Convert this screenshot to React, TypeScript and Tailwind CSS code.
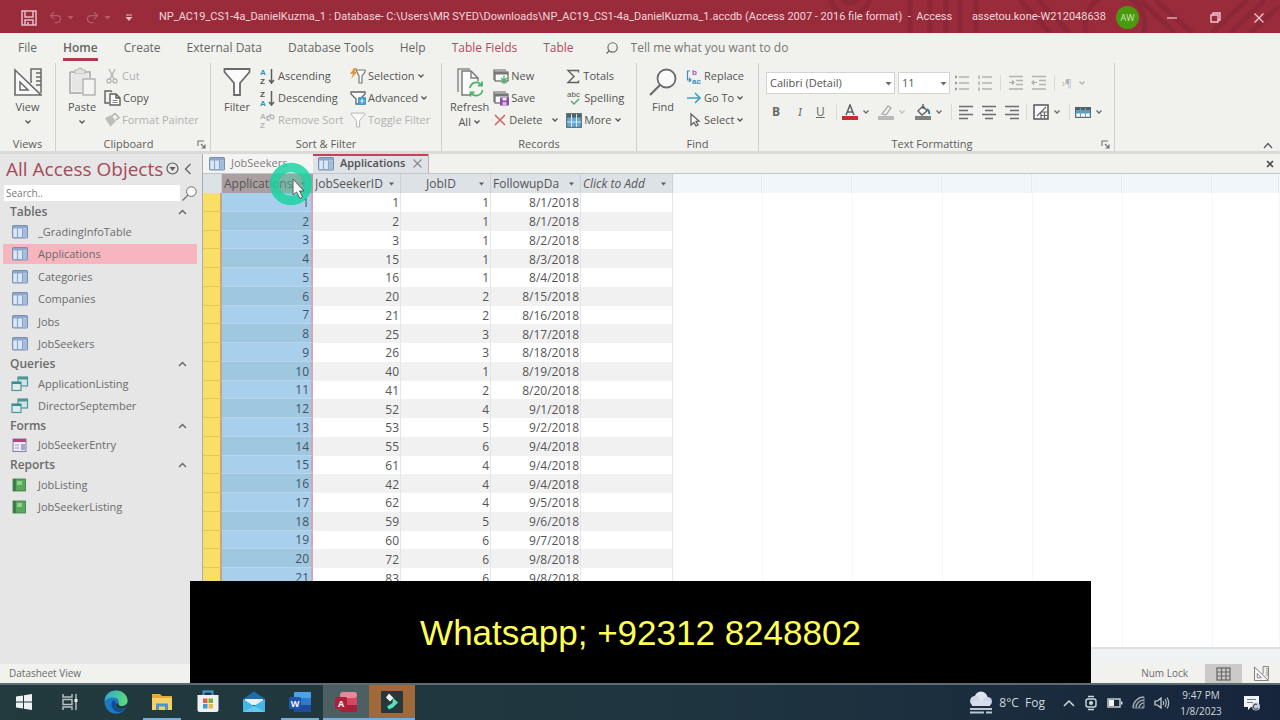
import React from "react";
import { Undo2, Redo2, Search } from "lucide-react";

type SvgProps = { w?: number; h?: number; vb?: string; children: React.ReactNode };

function Svg({ w = 16, h = 16, vb, children }: SvgProps) {
  return (
    <svg width={w} height={h} viewBox={vb ?? `0 0 ${w} ${h}`} fill="none" className="shrink-0" aria-hidden="true">
      {children}
    </svg>
  );
}

function Chevron() {
  return (
    <Svg w={8} h={6}>
      <path d="M1.5 1.5 L4 4 L6.5 1.5" stroke="currentColor" strokeWidth="1.3" />
    </Svg>
  );
}

function Caret() {
  return (
    <Svg w={7} h={5}>
      <path d="M0.5 1 H6.5 L3.5 4.5 Z" fill="currentColor" />
    </Svg>
  );
}

function ViewIcon({ size = 28 }: { size?: number }) {
  return (
    <Svg w={size} h={size} vb="0 0 28 28">
      <path d="M1 2 L27 27 H1 Z" stroke="#6a6a6a" strokeWidth="1.6" fill="#fafafa" />
      <path d="M6 14 L14 22 H6 Z" stroke="#6a6a6a" strokeWidth="1.5" />
      <path d="M17 15 V1 H27 V25" stroke="#6a6a6a" strokeWidth="1.5" />
      <path d="M22 5 H27 M22 9 H27 M22 13 H27 M22 17 H27" stroke="#6a6a6a" strokeWidth="1.3" />
    </Svg>
  );
}

function PasteIcon() {
  return (
    <Svg w={28} h={30}>
      <path d="M2 5 H8 M15 5 H22 V11 M2 5 V26 H14" stroke="#b9b9b7" strokeWidth="2" />
      <path d="M8 3 H10 C10 0.5 14 0.5 14 3 H17 V7 H7 V3 Z" fill="#e4e4e2" stroke="#b9b9b7" strokeWidth="1.2" />
      <path d="M4 7 H20 V11 H14 V24 H4 Z" fill="#e6e6e4" />
      <rect x="15" y="12" width="12" height="16" fill="#f4f4f2" stroke="#b0b0ae" strokeWidth="1.4" />
    </Svg>
  );
}

function FunnelIcon({ w = 28, h = 30, muted = false }: { w?: number; h?: number; muted?: boolean }) {
  return (
    <Svg w={w} h={h} vb="0 0 28 30">
      <path d="M1.5 2 H26.5 V5 L17 16 V28 H11 V16 L1.5 5 Z" fill="#fbfbfb" stroke={muted ? "#b5b5b5" : "#6a6a6a"} strokeWidth="1.8" />
    </Svg>
  );
}

function RefreshIcon() {
  return (
    <Svg w={30} h={30}>
      <path d="M3 25 V2 H15" stroke="#8a8a8a" strokeWidth="1.5" />
      <path d="M7 28 V4 H16 L23 11 V28 Z" fill="#fdfdfd" stroke="#7b7b7b" strokeWidth="1.5" />
      <path d="M16 4 V11 H23" stroke="#7b7b7b" strokeWidth="1.4" />
      <circle cx="21" cy="22" r="8" fill="#f3f3f0" />
      <path d="M15 21 A6.4 6.4 0 0 1 26.5 18 M27 14.500 V18.500 H23 M27.500 23 A6.400 6.400 0 0 1 16 26 M15.500 29.500 V25.500 H19.500" stroke="#4cb36a" strokeWidth="1.8" />
    </Svg>
  );
}

function FindIcon({ size = 28 }: { size?: number }) {
  return (
    <Svg w={size} h={size} vb="0 0 28 28">
      <circle cx="17.500" cy="10.500" r="9" stroke="#6a6a6a" strokeWidth="1.8" fill="#fafafa" />
      <path d="M11 17 L1 27" stroke="#6a6a6a" strokeWidth="2.2" />
    </Svg>
  );
}

function SortIcon({ top, bottom, muted = false }: { top: string; bottom: string; muted?: boolean }) {
  const tone = (letter: string) => (muted ? "#b5b5b5" : letter === "A" ? "#2b93b8" : "#555555");
  return (
    <Svg w={17} h={20}>
      <text x="1" y="9" fontSize="8" fontWeight="700" fontFamily="Liberation Sans, sans-serif" fill={tone(top)}>{top}</text>
      <text x="1" y="18" fontSize="8" fontWeight="700" fontFamily="Liberation Sans, sans-serif" fill={tone(bottom)}>{bottom}</text>
      {muted ? (
        <path d="M8 9 C9 4 15 4 15 7 C15 10 11 9 11 6 M8 6 V10 H11" stroke="#b5b5b5" strokeWidth="1.3" />
      ) : (
        <path d="M12.500 3 V17 M10 14 L12.500 17 L15 14" stroke="#5f5f5f" strokeWidth="1.5" />
      )}
    </Svg>
  );
}

function CutIcon() {
  return (
    <Svg>
      <path d="M5 1 L10 11 M11 1 L6 11" stroke="#b5b5b5" strokeWidth="1.4" />
      <circle cx="5" cy="13" r="2" stroke="#b5b5b5" strokeWidth="1.3" />
      <circle cx="11" cy="13" r="2" stroke="#b5b5b5" strokeWidth="1.3" />
    </Svg>
  );
}

function CopyIcon() {
  return (
    <Svg w={17}>
      <path d="M5 13 H1 V1 H7 L8 2" stroke="#5f5f5f" strokeWidth="1.4" />
      <path d="M6 4 H12 L16 8 V15 H6 Z M12 4 V8 H16" stroke="#5f5f5f" strokeWidth="1.4" fill="#fcfcfc" />
      <path d="M8.500 10.500 H13.500 M8.500 12.500 H13.500" stroke="#8a8a8a" />
    </Svg>
  );
}

function PainterIcon() {
  return (
    <Svg>
      <path d="M1 6 L7 3 L12 9 L6 15 C6 12 3 11 1 6 Z" fill="#bdbdbb" />
      <path d="M8 4 L11 1.500 L15 5.500 L12 8" stroke="#b0b0ae" strokeWidth="1.5" />
    </Svg>
  );
}

function SelectionIcon() {
  return (
    <Svg>
      <path d="M6 2 H15 V4 L12 8 V15 H9 V8 Z" fill="#fafafa" stroke="#777777" strokeWidth="1.2" />
      <path d="M4 0 L0 6 H3 L1 11 L7 4 H4.500 L7 0 Z" fill="#e5943a" />
    </Svg>
  );
}

function AdvancedIcon() {
  return (
    <Svg>
      <path d="M1 2 H15 V4 L10 9 V14 H6 V9 L1 4 Z" fill="#fafafa" stroke="#666666" strokeWidth="1.3" />
      <rect x="8" y="7" width="8" height="8" rx="1" fill="#3f9ec8" />
      <path d="M12 8.500 V13.500 M9.500 11 H14.500" stroke="#dbeef8" strokeWidth="1.2" />
    </Svg>
  );
}

function RecordIcon({ save = false }: { save?: boolean }) {
  return (
    <Svg w={16} h={15}>
      <path d="M1 11 V1 H13" stroke="#666666" strokeWidth="1.2" />
      <rect x="2" y="3" width="13" height="9" stroke="#666666" strokeWidth="1.2" fill="#fafafa" />
      <rect x="2" y="3" width="13" height="2.500" fill="#777777" />
      {save ? (
        <>
          <rect x="7" y="6.500" width="9" height="8" fill="#8d4ba8" />
          <rect x="9.500" y="7" width="4" height="2.500" fill="#f5eaf8" />
          <rect x="9.500" y="11" width="4" height="3" fill="#d9b9e4" />
        </>
      ) : (
        <path d="M11 6.500 V15 M8 9 L13.500 14 M14 9 L8.500 14" stroke="#4fae6b" strokeWidth="1.3" />
      )}
    </Svg>
  );
}

function DeleteIcon() {
  return (
    <Svg w={14} h={14}>
      <path d="M2 2 L12 12 M12 2 L2 12" stroke="#d06a70" strokeWidth="1.7" />
    </Svg>
  );
}

function SigmaIcon() {
  return (
    <Svg w={15} h={15}>
      <path d="M12.500 3.500 V1.500 H2 L8 7.500 L2 13.500 H12.500 V11.500" stroke="#5f5f5f" strokeWidth="1.4" />
    </Svg>
  );
}

function SpellIcon() {
  return (
    <Svg w={16} h={18}>
      <text x="1" y="8" fontSize="8" fontFamily="Liberation Sans, sans-serif" fill="#555555">abc</text>
      <path d="M5 12 L8 15 L13 10" stroke="#4fae6b" strokeWidth="1.5" />
    </Svg>
  );
}

function MoreIcon() {
  return (
    <Svg w={16} h={15}>
      <rect x="0.700" y="0.700" width="14.600" height="13.600" fill="#63a9d6" stroke="#5b6a74" strokeWidth="1.200" />
      <rect x="1" y="1" width="14" height="3.500" fill="#555f68" />
      <path d="M5.500 1 V14 M10.500 1 V14 M1 9 H15" stroke="#e3f0f8" strokeWidth="0.900" />
    </Svg>
  );
}

function RowColourIcon() {
  return (
    <Svg w={16} h={11}>
      <rect x="0.600" y="0.600" width="14.800" height="9.800" fill="#f6fafc" stroke="#5b6a74" strokeWidth="1.200" />
      <rect x="0" y="0" width="16" height="3" fill="#555f68" />
      <rect x="1" y="3" width="14" height="3.500" fill="#4f9fd0" />
      <path d="M5.500 1 V10 M10.500 1 V10" stroke="#8a98a2" strokeWidth="1" />
    </Svg>
  );
}

function ReplaceIcon() {
  return (
    <Svg w={16} h={20}>
      <text x="6" y="9" fontSize="8" fontWeight="700" fontFamily="Liberation Sans, sans-serif" fill="#a255b4">b</text>
      <text x="6" y="18" fontSize="8" fontWeight="700" fontFamily="Liberation Sans, sans-serif" fill="#3a8fc0">ac</text>
      <path d="M4 5 H1.500 V14 H4.500 M3 12 L5 14 L3 16" stroke="#3a8fc0" strokeWidth="1.200" />
    </Svg>
  );
}

function ArrowIcon() {
  return (
    <Svg w={16} h={14}>
      <path d="M1 7 H14 M9 2 L14 7 L9 12" stroke="#3fa3c4" strokeWidth="1.700" />
    </Svg>
  );
}

function PointerIcon() {
  return (
    <Svg w={16} h={16}>
      <path d="M5 2 V13 L8 10.500 L10 14 L12 13 L10 9.500 L13 9 Z" stroke="#5f5f5f" strokeWidth="1.300" fill="#fdfdfd" />
    </Svg>
  );
}

function TableIcon() {
  return (
    <Svg w={16} h={14}>
      <rect x="0.600" y="0.600" width="14.800" height="12.300" rx="1" fill="#dbe8f5" stroke="#7590b3" strokeWidth="1.200" />
      <rect x="1" y="1" width="14" height="2.500" fill="#8da7c9" />
      <path d="M5.500 3 V13 M10.500 3 V13" stroke="#8da7c9" strokeWidth="1.200" />
      <rect x="11" y="4" width="4" height="8.500" fill="#a5bddb" />
    </Svg>
  );
}

function QueryIcon() {
  return (
    <Svg w={18} h={16}>
      <rect x="7" y="1" width="9.500" height="9" fill="#cfe6e6" stroke="#4f9699" strokeWidth="1.200" />
      <rect x="7" y="1" width="9.500" height="2.500" fill="#4f9699" />
      <rect x="1" y="6" width="9" height="8.500" fill="#dbeceb" stroke="#4f9699" strokeWidth="1.200" />
      <rect x="1" y="6" width="9" height="2" fill="#3e8a92" />
    </Svg>
  );
}

function FormIcon() {
  return (
    <Svg w={16} h={15}>
      <rect x="1" y="1" width="13" height="12.500" fill="#eeeaf6" stroke="#8b83ab" strokeWidth="1.100" />
      <rect x="1" y="1" width="13" height="3" fill="#b4467e" />
      <path d="M3 7 H7 M3 10 H7" stroke="#a29bc0" strokeWidth="1.200" />
      <rect x="9" y="6" width="4" height="6" fill="#a7a4d2" />
    </Svg>
  );
}

function ReportIcon() {
  return (
    <Svg w={16} h={14}>
      <rect x="1" y="1" width="12.500" height="12" fill="#58a85b" stroke="#3e7a45" strokeWidth="0.800" />
      <rect x="1" y="1" width="3" height="12" fill="#3d7c44" />
      <path d="M5 3 H10 V7 H5 Z" fill="#8fd08c" />
    </Svg>
  );
}

function ListIcon({ kind }: { kind: "bullets" | "numbers" | "outdent" | "indent" }) {
  const indent = kind === "outdent" || kind === "indent";
  return (
    <Svg w={16} h={16}>
      {indent ? (
        <>
          <path d="M1 1.500 H15 M8 5.500 H15 M8 9.500 H15 M1 14 H15" stroke="#b3b3b1" strokeWidth="1.300" />
          <path d={kind === "outdent" ? "M6 7.500 H1 M3 5.500 L1 7.500 L3 9.500" : "M1 7.500 H6 M4 5.500 L6 7.500 L4 9.500"} stroke="#a9a9a7" strokeWidth="1.200" />
        </>
      ) : (
        <>
          <path d="M5 2 H15 M5 8 H15 M5 14 H15" stroke="#b3b3b1" strokeWidth="1.400" />
          {kind === "bullets" ? (
            <path d="M1 2 H3 M1 8 H3 M1 14 H3" stroke="#9f9f9d" strokeWidth="2.400" />
          ) : (
            <path d="M2 0.500 V4 M2 6.500 V10 M2 12.500 V16" stroke="#a6a6a4" strokeWidth="1.300" />
          )}
        </>
      )}
    </Svg>
  );
}

function AlignIcon({ kind }: { kind: "left" | "center" | "right" }) {
  const short = kind === "left" ? "M1 5.500 H10 M1 13.500 H10" : kind === "center" ? "M4 5.500 H12 M4 13.500 H12" : "M6 5.500 H15 M6 13.500 H15";
  return (
    <Svg w={16} h={15}>
      <path d={`M1 1.500 H15 M1 9.500 H15 ${short}`} stroke="#6d6d6b" strokeWidth="1.300" />
    </Svg>
  );
}

function Launcher() {
  return (
    <Svg w={9} h={9}>
      <path d="M1 6 V1 H7 M4 4 L8 8 M8 4.500 V8 H4.500" stroke="#6f6f6f" strokeWidth="1.100" />
    </Svg>
  );
}

function Small({ icon, label, muted = false, menu = false, split = false }: { icon: React.ReactNode; label: string; muted?: boolean; menu?: boolean; split?: boolean }) {
  return (
    <button type="button" className={`flex h-[22px] items-center gap-[2px] whitespace-nowrap text-[11px] ${muted ? "text-[#b0b0ae]" : "text-[#545452]"}`}>
      {icon}
      <span>{label}</span>
      {split && <span className="w-1" />}
      {(menu || split) && <Chevron />}
    </button>
  );
}

function Large({ icon, label, second, menu = false }: { icon: React.ReactNode; label: string; second?: string; menu?: boolean }) {
  return (
    <button type="button" className="flex flex-col items-center text-[11px] leading-[15px] text-[#545452]">
      <span className="flex h-[34px] items-center">{icon}</span>
      <span>{label}</span>
      {second && (
        <span className="flex items-center gap-[2px]">
          {second}
          <Chevron />
        </span>
      )}
      {menu && (
        <span className="flex h-[15px] items-center">
          <Chevron />
        </span>
      )}
    </button>
  );
}

function Group({ label, width, launcher = false, children }: { label: string; width: string; launcher?: boolean; children: React.ReactNode }) {
  return (
    <section className={`flex shrink-0 flex-col ${width}`} aria-label={label}>
      <div className="flex flex-1 border-r border-[#cfcfcd]">{children}</div>
      <div className="flex h-[14px] items-center border-r border-[#cfcfcd] px-1 text-[11px] leading-[14px] text-[#5c5c5a]">
        <span className="flex-1 text-center">{label}</span>
        {launcher && (
          <button type="button" aria-label={`${label} settings`}>
            <Launcher />
          </button>
        )}
      </div>
    </section>
  );
}

function Divider() {
  return <span className="h-4 w-px bg-[#d9d9d7]" />;
}

const ribbonTabs = [
  { name: "File", look: "" },
  { name: "Home", look: "font-semibold" },
  { name: "Create", look: "" },
  { name: "External Data", look: "" },
  { name: "Database Tools", look: "" },
  { name: "Help", look: "" },
  { name: "Table Fields", look: "text-[#b34a5e]" },
  { name: "Table", look: "text-[#b34a5e]" },
];

const navGroups = [
  { name: "Tables", height: "h-[135px]", icon: <TableIcon />, items: ["_GradingInfoTable", "Applications", "Categories", "Companies", "Jobs", "JobSeekers"] },
  { name: "Queries", height: "h-[45px]", icon: <QueryIcon />, items: ["ApplicationListing", "DirectorSeptember"] },
  { name: "Forms", height: "h-[22px]", icon: <FormIcon />, items: ["JobSeekerEntry"] },
  { name: "Reports", height: "h-[45px]", icon: <ReportIcon />, items: ["JobListing", "JobSeekerListing"] },
];

const rows: [number, number, string][] = [
  [1, 1, "8/1/2018"],
  [2, 1, "8/1/2018"],
  [3, 1, "8/2/2018"],
  [15, 1, "8/3/2018"],
  [16, 1, "8/4/2018"],
  [20, 2, "8/15/2018"],
  [21, 2, "8/16/2018"],
  [25, 3, "8/17/2018"],
  [26, 3, "8/18/2018"],
  [40, 1, "8/19/2018"],
  [41, 2, "8/20/2018"],
  [52, 4, "9/1/2018"],
  [53, 5, "9/2/2018"],
  [55, 6, "9/4/2018"],
  [61, 4, "9/4/2018"],
  [42, 4, "9/4/2018"],
  [62, 4, "9/5/2018"],
  [59, 5, "9/6/2018"],
  [60, 6, "9/7/2018"],
  [72, 6, "9/8/2018"],
  [83, 6, "9/8/2018"],
];

function TitleBar() {
  return (
    <header className="relative flex h-[33px] shrink-0 items-center overflow-hidden bg-[#9a2b3b] pt-[2px] text-[11px] text-[#f0d6da]">
      <div className="absolute inset-y-0 right-0">
        <Svg w={500} h={33}>
          <g stroke="#7f2434" strokeWidth="5" opacity="0.500">
            <circle cx="70" cy="-5" r="20" />
            <circle cx="70" cy="-5" r="8" />
            <path d="M130 0 V33 M150 0 V33 M166 0 V33 M180 0 V33 M196 0 V33 M240 0 L270 33 M258 0 L290 33" />
            <circle cx="335" cy="24" r="30" />
            <path d="M360 0 L395 33 M376 0 L412 33 M450 33 L485 0 M432 33 L467 0 M470 33 L500 6" />
          </g>
        </Svg>
      </div>
      <div className="relative flex w-[159px] shrink-0 items-center gap-[11px] pl-[21px]">
        <button type="button" aria-label="Save">
          <Svg w={16} h={16}>
            <path d="M1 1 H15 V15 H1 Z M4 1 V7 H12 V1 M4 15 V10 H12 V15 M7 12 V15" stroke="#e6bcc3" strokeWidth="1.500" />
          </Svg>
        </button>
        <button type="button" aria-label="Undo" className="flex items-center gap-1 text-[#b85a68]">
          <Undo2 size={15} />
          <Caret />
        </button>
        <button type="button" aria-label="Redo" className="flex items-center gap-1 text-[#b85a68]">
          <Redo2 size={15} />
          <Caret />
        </button>
        <button type="button" aria-label="Customize toolbar" className="ml-[3px] text-[#e6bcc3]">
          <Svg w={8} h={8}>
            <path d="M1 1 H7" stroke="currentColor" />
            <path d="M0.500 3 H7.500 L4 7 Z" fill="currentColor" />
          </Svg>
        </button>
      </div>
      <h1 className="relative flex-1 font-[Roboto,sans-serif] whitespace-pre">
        {"NP_AC19_CS1-4a_DanielKuzma_1 : Database- C:\\Users\\MR SYED\\Downloads\\NP_AC19_CS1-4a_DanielKuzma_1.accdb (Access 2007 - 2016 file format)  -  Access"}
      </h1>
      <div className="relative flex shrink-0 items-center">
        <span className="font-[Roboto,sans-serif]">assetou.kone-W212048638</span>
        <span className="ml-[10px] flex size-[23px] items-center justify-center rounded-full bg-[#4a9a10] text-[9px] text-[#cfe8b4]">AW</span>
        <button type="button" aria-label="Minimize" className="flex w-[43px] justify-center pl-[22px]">
          <Svg w={10} h={10}>
            <path d="M0 5 H10" stroke="#efc9cf" strokeWidth="1.200" />
          </Svg>
        </button>
        <button type="button" aria-label="Restore" className="ml-[28px]">
          <Svg w={11} h={11}>
            <path d="M1 3 H8 V10 H1 Z M3 3 V1 H10 V8 H8" stroke="#efc9cf" strokeWidth="1.400" />
          </Svg>
        </button>
        <button type="button" aria-label="Close" className="mr-[16px] ml-[33px]">
          <Svg w={10} h={10}>
            <path d="M0.500 0.500 L9.500 9.500 M9.500 0.500 L0.500 9.500" stroke="#efc9cf" strokeWidth="1.300" />
          </Svg>
        </button>
      </div>
    </header>
  );
}

function Ribbon() {
  return (
    <div className="flex h-[121px] shrink-0 flex-col border-b-[3px] border-[#dadad8] bg-[#f1f2ee]">
      <nav className="flex h-[30px] items-center gap-[26px] pl-[18px] text-xs text-[#666664]">
        {ribbonTabs.map((tab) => (
          <a key={tab.name} href="#" className={`flex h-full flex-col justify-center whitespace-nowrap pt-[3px] ${tab.look}`}>
            <span className="flex h-[18px] items-center">{tab.name}</span>
            <span className={`mt-px h-[3px] w-full ${tab.name === "Home" ? "bg-[#b0394d]" : ""}`} />
          </a>
        ))}
        <label className="ml-[5px] flex items-center gap-[12px]">
          <Search size={14} className="-scale-x-100 text-[#6a6a6a]" />
          <input aria-label="Tell me" placeholder="Tell me what you want to do" className="w-[220px] bg-transparent outline-none placeholder:text-[#767674]" />
        </label>
      </nav>
      <div className="flex flex-1 items-stretch">
        <Group label="Views" width="w-[56px]">
          <div className="flex flex-1 justify-center pt-[2px]">
            <Large icon={<ViewIcon />} label="View" menu />
          </div>
        </Group>
        <Group label="Clipboard" width="w-[155px]" launcher>
          <div className="flex gap-[8px] pt-[2px] pl-[12px]">
            <Large icon={<PasteIcon />} label="Paste" menu />
            <div className="flex flex-col">
              <Small icon={<CutIcon />} label="Cut" muted />
              <Small icon={<CopyIcon />} label="Copy" />
              <Small icon={<PainterIcon />} label="Format Painter" muted />
            </div>
          </div>
        </Group>
        <Group label="Sort & Filter" width="w-[231px]">
          <div className="flex pt-[2px] pl-[12px]">
            <Large icon={<FunnelIcon />} label="Filter" />
            <div className="ml-[8px] flex w-[91px] flex-col">
              <Small icon={<SortIcon top="A" bottom="Z" />} label="Ascending" />
              <Small icon={<SortIcon top="Z" bottom="A" />} label="Descending" />
              <Small icon={<SortIcon top="A" bottom="Z" muted />} label="Remove Sort" muted />
            </div>
            <div className="flex flex-col">
              <Small icon={<SelectionIcon />} label="Selection" menu />
              <Small icon={<AdvancedIcon />} label="Advanced" menu />
              <Small icon={<FunnelIcon w={16} h={16} muted />} label="Toggle Filter" muted />
            </div>
          </div>
        </Group>
        <Group label="Records" width="w-[195px]">
          <div className="flex pt-[2px] pl-[8px]">
            <Large icon={<RefreshIcon />} label="Refresh" second="All" />
            <div className="ml-[4px] flex w-[73px] flex-col">
              <Small icon={<RecordIcon />} label="New" />
              <Small icon={<RecordIcon save />} label="Save" />
              <Small icon={<DeleteIcon />} label="Delete" split />
            </div>
            <div className="flex flex-col">
              <Small icon={<SigmaIcon />} label="Totals" />
              <Small icon={<SpellIcon />} label="Spelling" />
              <Small icon={<MoreIcon />} label="More" menu />
            </div>
          </div>
        </Group>
        <Group label="Find" width="w-[122px]">
          <div className="flex gap-[9px] pt-[2px] pl-[12px]">
            <Large icon={<FindIcon />} label="Find" />
            <div className="flex flex-col">
              <Small icon={<ReplaceIcon />} label="Replace" />
              <Small icon={<ArrowIcon />} label="Go To" menu />
              <Small icon={<PointerIcon />} label="Select" menu />
            </div>
          </div>
        </Group>
        <Group label="Text Formatting" width="w-[356px]" launcher>
          <div className="flex flex-col gap-[8px] pt-[9px] pl-[7px] text-[#6a6a68]">
            <div className="flex h-[22px] items-center">
              <div className="relative flex items-center">
                <select aria-label="Font" className="h-[22px] w-[129px] appearance-none border border-[#d3d3d1] bg-white px-[3px] text-[11px] leading-[20px] text-[#545452]">
                  <option>Calibri (Detail)</option>
                </select>
                <span className="pointer-events-none absolute right-[3px]"><Caret /></span>
              </div>
              <div className="relative ml-[3px] flex items-center">
                <select aria-label="Font size" className="h-[22px] w-[52px] appearance-none border border-[#d3d3d1] bg-white px-[3px] text-[11px] leading-[20px] text-[#545452]">
                  <option>11</option>
                </select>
                <span className="pointer-events-none absolute right-[3px]"><Caret /></span>
              </div>
              <div className="ml-[4px] flex items-center gap-[7px]">
                <button type="button" aria-label="Bullets"><ListIcon kind="bullets" /></button>
                <button type="button" aria-label="Numbering"><ListIcon kind="numbers" /></button>
                <Divider />
                <button type="button" aria-label="Increase indent"><ListIcon kind="indent" /></button>
                <button type="button" aria-label="Decrease indent"><ListIcon kind="outdent" /></button>
                <Divider />
                <button type="button" className="flex items-center gap-[6px] text-[10px] text-[#b0b0ae]">
                  ›¶
                  <Chevron />
                </button>
              </div>
            </div>
            <div className="flex h-[20px] items-center pl-[6px] text-xs">
              <button type="button" className="w-[22px] text-left font-bold">B</button>
              <button type="button" className="w-[22px] pl-1 text-left font-serif italic">I</button>
              <button type="button" className="w-[20px] text-left underline">U</button>
              <Divider />
              <button type="button" aria-label="Font colour" className="ml-[5px] flex w-[36px] items-center gap-[4px]">
                <Svg w={16} h={16}>
                  <path d="M4 11 L8 1 L12 11 M5.500 8 H10.500" stroke="#5f5f5f" strokeWidth="1.500" />
                  <rect x="0" y="12" width="16" height="4" fill="#c92b35" />
                </Svg>
                <Chevron />
              </button>
              <button type="button" aria-label="Highlight colour" className="flex w-[37px] items-center gap-[4px] text-[#c0c0be]">
                <Svg w={16} h={16}>
                  <path d="M4 10 L10 2 L13 4 L8 11 Z" stroke="#b0b0ae" strokeWidth="1.400" />
                  <rect x="0" y="12" width="16" height="4" fill="#b9b9b7" />
                </Svg>
                <Chevron />
              </button>
              <button type="button" aria-label="Fill colour" className="flex w-[36px] items-center gap-[4px]">
                <Svg w={16} h={16}>
                  <path d="M3 7 L8 2 L12 7 L7 11 Z M8 0 V5" stroke="#5f5f5f" strokeWidth="1.400" fill="#fafafa" />
                  <path d="M12 5 Q15 7 14 10" stroke="#2f7fae" strokeWidth="2" />
                  <rect x="0" y="12" width="16" height="4" fill="#80807e" />
                </Svg>
                <Chevron />
              </button>
              <Divider />
              <div className="flex items-center gap-[7px] px-[6px]">
                <button type="button" aria-label="Align left"><AlignIcon kind="left" /></button>
                <button type="button" aria-label="Center"><AlignIcon kind="center" /></button>
                <button type="button" aria-label="Align right"><AlignIcon kind="right" /></button>
              </div>
              <Divider />
              <button type="button" aria-label="Gridlines" className="mr-[8px] ml-[6px] flex items-center gap-[4px]">
                <Svg w={16} h={16}>
                  <rect x="1" y="1" width="14" height="14" stroke="#5f5f5f" strokeWidth="1.600" fill="#fafafa" />
                  <path d="M4 12 L13 3 M8 15 V8 H15 M8 11.500 H15 M11.500 8 V15" stroke="#6a6a6a" strokeWidth="1.200" />
                </Svg>
                <Chevron />
              </button>
              <Divider />
              <button type="button" aria-label="Alternate row colour" className="ml-[5px] flex items-center gap-[4px]">
                <RowColourIcon />
                <Chevron />
              </button>
            </div>
          </div>
        </Group>
        <div className="flex flex-1 items-end justify-end pr-[7px] pb-[2px] text-[#5f5f5f]">
          <button type="button" aria-label="Collapse ribbon">
            <Svg w={10} h={7}>
              <path d="M1 6 L5 1.500 L9 6" stroke="currentColor" strokeWidth="1.400" />
            </Svg>
          </button>
        </div>
      </div>
    </div>
  );
}

function NavPane() {
  return (
    <aside className="flex w-[202px] shrink-0 flex-col bg-[#e6e6e6] pr-[5px] text-[11px] text-[#6b6b6b]">
      <div className="flex h-[29px] items-center pl-[6px]">
        <h2 className="flex-1 whitespace-nowrap text-[19px] leading-[28px] text-[#a8485a]">All Access Objects</h2>
        <button type="button" aria-label="Object menu" className="text-[#5c5c5c]">
          <Svg w={13} h={13}>
            <circle cx="6.500" cy="6.500" r="5.500" stroke="currentColor" strokeWidth="1.200" />
            <path d="M3.500 5 H9.500 L6.500 9 Z" fill="currentColor" />
          </Svg>
        </button>
        <button type="button" aria-label="Collapse pane" className="px-[5px] text-[#6b6b6b]">
          <Svg w={8} h={12}>
            <path d="M6.500 1 L1.500 6 L6.500 11" stroke="currentColor" strokeWidth="1.400" />
          </Svg>
        </button>
      </div>
      <div className="mt-[2px] mb-[2px] flex h-[16px] items-center gap-[2px] pl-[4px]">
        <input aria-label="Search" placeholder="Search.." className="h-full min-w-0 flex-1 bg-white px-[2px] text-[10px] outline-none placeholder:text-[#7b7b7b]" />
        <FindIcon size={15} />
      </div>
      {navGroups.map((group) => (
        <section key={group.name}>
          <h3 className="flex h-[17px] items-center justify-between pt-px pr-[10px] pl-[10px] text-xs font-semibold">
            {group.name}
            <button type="button" aria-label={`Collapse ${group.name}`}>
              <Svg w={9} h={6}>
                <path d="M1 5 L4.500 1.500 L8 5" stroke="currentColor" strokeWidth="1.500" />
              </Svg>
            </button>
          </h3>
          <ul className={`grid auto-rows-fr ${group.height}`}>
            {group.items.map((item) => (
              <li key={item} className="flex items-center pt-px pl-[3px]">
                <a href="#" className={`flex h-[20px] flex-1 items-center gap-[10px] pl-[9px] ${item === "Applications" ? "bg-[#f7b6bf]" : ""}`}>
                  <span className="flex w-[16px] justify-center">{group.icon}</span>
                  {item}
                </a>
              </li>
            ))}
          </ul>
        </section>
      ))}
    </aside>
  );
}

function ColumnHead({ name, look = "bg-[#dde2e7] border-[#c9d0d6]", align = "" }: { name: string; look?: string; align?: string }) {
  return (
    <th scope="col" className={`h-[19px] border-r p-0 pt-px font-normal ${look}`}>
      <div className="flex items-center pr-[6px] pl-[2px] leading-[16px]">
        <span className={`flex-1 overflow-hidden whitespace-nowrap ${align || "text-left"}`}>{name}</span>
        <Svg w={5} h={4}>
          <path d="M0 0.500 H5 L2.500 3.500 Z" fill="#5b5b5b" />
        </Svg>
      </div>
    </th>
  );
}

function Datasheet() {
  return (
    <div className="flex min-h-0 flex-1 overflow-hidden bg-white">
      <table className="h-[413px] w-[470px] shrink-0 table-fixed border-separate border-spacing-0 text-xs leading-[14px] text-[#555555]">
        <colgroup>
          <col className="w-[19px]" />
          <col className="w-[91px]" />
          <col className="w-[88px]" />
          <col className="w-[90px]" />
          <col className="w-[90px]" />
          <col className="w-[92px]" />
        </colgroup>
        <thead>
          <tr>
            <td className="h-[19px] border-r border-[#c9d0d6] bg-[#dde2e7] p-0" />
            <ColumnHead name="Applications" look="bg-[#ab9fa1] border-[#c88f9b]" />
            <ColumnHead name="JobSeekerID" />
            <ColumnHead name="JobID" align="text-center" />
            <ColumnHead name="FollowupDa" />
            <ColumnHead name="Click to Add" look="bg-[#dde2e7] border-[#c9d0d6] italic" />
          </tr>
        </thead>
        <tbody>
          {rows.map(([seeker, job, date], i) => {
            const odd = i % 2 === 1;
            const cell = `border-r border-[#e6e6e6] p-0 pt-[2px] pr-px text-right ${odd ? "bg-[#f1f1f1]" : "bg-white"}`;
            return (
              <tr key={i}>
                <td className="border-r-2 border-b border-r-[#c9a48c] border-b-[#e0c95c] bg-[#f9df66] p-0" />
                <td className={`border-r-2 border-b border-r-[#dba3b8] border-b-[#b7d6ec] p-0 pt-[2px] pr-[2px] text-right text-[#3f5566] ${odd ? "bg-[#9fc7e0]" : "bg-[#a8d0ec]"}`}>{i + 1}</td>
                <td className={cell}>{seeker}</td>
                <td className={cell}>{job}</td>
                <td className={cell}>{date}</td>
                <td className={cell} />
              </tr>
            );
          })}
        </tbody>
      </table>
      <div className="flex flex-1">
        {[0, 1, 2, 3, 4, 5, 6].map((n) => (
          <div key={n} className={`border-r border-[#f6f7f9] ${n === 6 ? "flex-1" : "w-[90px]"}`}>
            <div className="h-[19px] border-r border-[#e6ecf3] bg-[#f1f6fb]" />
          </div>
        ))}
      </div>
    </div>
  );
}

function DocumentArea() {
  return (
    <main className="relative flex min-w-0 flex-1 flex-col border-l border-[#a9adb2] bg-white">
      <div className="flex h-[20px] shrink-0 items-stretch border-b border-[#c3c6c9] bg-[#f1f2ee] text-[11px]">
        <button type="button" className="flex w-[110px] items-center gap-[6px] bg-[#f4f5f3] pl-[6px] text-[#7c7c7c]">
          <TableIcon />
          JobSeekers
        </button>
        <div className="flex w-[116px] items-center gap-[6px] border-r border-r-[#d0a5ac] bg-[#dfe2e6] pl-[5px] font-semibold text-[#4f4f4f] shadow-[inset_0_2px_0_#c04458]">
          <TableIcon />
          <span className="flex-1">Applications</span>
          <button type="button" aria-label="Close Applications" className="pr-[6px]">
            <Svg w={9} h={9}>
              <path d="M0.500 0.500 L8.500 8.500 M8.500 0.500 L0.500 8.500" stroke="#8a8a8a" strokeWidth="1.200" />
            </Svg>
          </button>
        </div>
        <div className="flex flex-1 items-center justify-end pr-[6px]">
          <button type="button" aria-label="Close object">
            <Svg w={8} h={8}>
              <path d="M1 1 L7 7 M7 1 L1 7" stroke="#4f4f4f" strokeWidth="1.700" />
            </Svg>
          </button>
        </div>
      </div>
      <Datasheet />
      <div className="h-[17px] shrink-0 border-t-2 border-[#dbe2e2] bg-[#eff2f3]" />
      <div className="pointer-events-none absolute top-[7px] left-[65px]">
        <Svg w={46} h={46}>
          <circle cx="23" cy="23" r="11" fill="#45cfae" opacity="0.450" />
          <circle cx="23" cy="23" r="16.500" stroke="#1cd3a2" strokeWidth="9.500" opacity="0.850" />
          <path d="M25 18 V34 L28.500 31 L32 37.500 L34.500 36 L31.500 30 H36 Z" fill="#f7f7f7" stroke="#5a5a5a" strokeWidth="1" />
        </Svg>
      </div>
    </main>
  );
}

function StatusBar() {
  return (
    <footer className="flex h-[19px] shrink-0 items-center bg-[#f1f1ee] text-[10px] text-[#6b6b6b]">
      <span className="flex-1 pl-[9px]">Datasheet View</span>
      <span className="pr-[17px]">Num Lock</span>
      <button type="button" aria-label="Datasheet view" className="flex h-full w-[37px] items-center justify-center bg-[#cbcac8]">
        <Svg w={15} h={14}>
          <rect x="1" y="1" width="13" height="12" stroke="#6a6a6a" strokeWidth="1.300" />
          <path d="M1 5 H14 M1 9 H14 M5.500 1 V13 M10 1 V13" stroke="#6a6a6a" strokeWidth="1.200" />
        </Svg>
      </button>
      <button type="button" aria-label="Design view" className="flex w-[38px] justify-center">
        <ViewIcon size={15} />
      </button>
    </footer>
  );
}

function WindowsIcon() {
  return (
    <Svg w={18} h={18}>
      <path d="M1 3.500 L8 2.500 V8.500 H1 Z M9 2.300 L17 1 V8.500 H9 Z M1 9.500 H8 V15.500 L1 14.500 Z M9 9.500 H17 V17 L9 15.700 Z" fill="#eef2f2" />
    </Svg>
  );
}

function TaskViewIcon() {
  return (
    <Svg w={18} h={16}>
      <path d="M2 0 V3 H11 V0 M2 5.500 H11 V10.500 H2 Z M2 16 V13 H11 V16 M15 0 V16" stroke="#b9c4c6" strokeWidth="1.400" />
      <rect x="13.500" y="5" width="3" height="3" fill="#e8eeee" />
    </Svg>
  );
}

function EdgeIcon() {
  return (
    <Svg w={24} h={24}>
      <defs>
        <linearGradient id="edge-top" x1="0" y1="0" x2="24" y2="10" gradientUnits="userSpaceOnUse">
          <stop offset="0" stopColor="#2aa5dd" />
          <stop offset="1" stopColor="#62dc70" />
        </linearGradient>
      </defs>
      <circle cx="12" cy="12" r="11.500" fill="#1d79c6" />
      <path d="M0.600 11 C1 4.500 6 0.500 12 0.500 C19 0.500 23.500 5.500 23.500 10.500 C23.500 14.500 20 16 17 16 C14.500 16 13.500 14.700 14.500 13 C15.500 11 14 7.500 9.500 7.500 C5.500 7.500 2 9 0.600 11 Z" fill="url(#edge-top)" />
      <path d="M9 10.500 C6.500 13 7 19 12 21.500 C16 23 20 21 22 18 C18 20 12.500 18.500 12 14 C12 12 11 10 9 10.500 Z" fill="#134f93" />
      <path d="M12 14 C12.500 18.500 18 20 22 17.500 L24 13 L21 15.500 C18 16.500 14 16.500 14.500 13 Z" fill="#24383c" />
    </Svg>
  );
}

function FolderIcon() {
  return (
    <Svg w={22} h={18}>
      <path d="M1 1 H9 L11 3 H21 V17 H1 Z" fill="#e5a93a" />
      <rect x="1" y="5" width="20" height="12" fill="#f7d067" />
      <path d="M5 17 V10.500 H17 V17 H14 V13.500 H8 V17 Z" fill="#4a96c6" />
    </Svg>
  );
}

function StoreIcon() {
  return (
    <Svg w={22} h={23}>
      <path d="M6.500 6 V1.500 H15.500 V6" stroke="#3fa2d8" strokeWidth="1.800" />
      <path d="M0.500 5 H21.500 V20 Q21.500 22 19.500 22 H2.500 Q0.500 22 0.500 20 Z" fill="#edf1f2" />
      <rect x="6" y="8.500" width="4.500" height="4.500" fill="#e2603c" />
      <rect x="11.500" y="8.500" width="4.500" height="4.500" fill="#7dae36" />
      <rect x="6" y="14" width="4.500" height="4.500" fill="#3c9cd6" />
      <rect x="11.500" y="14" width="4.500" height="4.500" fill="#efb93a" />
    </Svg>
  );
}

function MailIcon() {
  return (
    <Svg w={24} h={22}>
      <path d="M1 8 L12 0.500 L23 8 V12 H1 Z" fill="#1e6bb0" />
      <path d="M3 8 H21 V14 H3 Z" fill="#e6f2f8" />
      <path d="M1 8 L12 15 L23 8 V21 H1 Z" fill="#43b8e6" />
      <path d="M12 15 L23 21 H1 Z" fill="#72d2f2" opacity="0.700" />
    </Svg>
  );
}

function OfficeIcon({ letter }: { letter: "W" | "A" }) {
  const word = letter === "W";
  return (
    <Svg w={24} h={22}>
      <rect x="6" y="1" width="17" height="20" rx={word ? 1.5 : 5} fill={word ? "#2f78ce" : "#d04a62"} />
      <rect x="6" y="1" width="17" height="6" rx={word ? 1 : 3} fill={word ? "#4aa3e6" : "#e8889a"} />
      <path d="M6 14 H23 V19 Q23 21 21 21 H8 Q6 21 6 19 Z" fill={word ? "#1c4c9c" : "#a81f3c"} />
      <rect x="1" y="6" width="12" height="12" rx="1.500" fill={word ? "#1f56ac" : "#b01f38"} />
      <text x="7" y="15.500" textAnchor="middle" fontSize="9" fontWeight="700" fontFamily="Open Sans, sans-serif" fill="#f3f3f6">{letter}</text>
    </Svg>
  );
}

function FilmoraIcon() {
  return (
    <Svg w={22} h={22}>
      <rect width="22" height="22" fill="#27383b" />
      <path d="M8 2.500 L12.500 7 L9 10.500 L5 6.500 Z" fill="#eefaf6" />
      <path d="M12 7 L17 11.500 L12 16.500 L8 18.500 L6 15.500 L11.500 12 Z" fill="#58e0bd" />
    </Svg>
  );
}

const apps = [
  { name: "Start", icon: <WindowsIcon />, look: "" },
  { name: "Task view", icon: <TaskViewIcon />, look: "" },
  { name: "Edge", icon: <EdgeIcon />, look: "" },
  { name: "File Explorer", icon: <FolderIcon />, look: "", line: "w-[38px]" },
  { name: "Store", icon: <StoreIcon />, look: "" },
  { name: "Mail", icon: <MailIcon />, look: "" },
  { name: "Word", icon: <OfficeIcon letter="W" />, look: "", line: "w-[38px]" },
  { name: "Access", icon: <OfficeIcon letter="A" />, look: "bg-[#4c6064]", line: "w-full" },
  { name: "Filmora", icon: <FilmoraIcon />, look: "bg-[#a1683a]", line: "w-full" },
];

function Taskbar() {
  return (
    <div className="flex h-[37px] shrink-0 items-stretch border-t-2 border-[#5d6c72] bg-linear-to-r from-[#22393d] via-[#1f3640] to-[#17253c] pl-px text-xs text-[#cfd8dc]">
      {apps.map((app) => (
        <button key={app.name} type="button" aria-label={app.name} className={`flex w-[46px] flex-col items-center ${app.look}`}>
          <span className="flex flex-1 items-center">{app.icon}</span>
          <span className={`h-[2px] ${app.line ? `${app.line} bg-[#76aedb]` : ""}`} />
        </button>
      ))}
      <div className="flex flex-1 items-center justify-end">
        <button type="button" className="flex items-center gap-[6px]">
          <Svg w={24} h={23}>
            <circle cx="12" cy="7" r="6.500" fill="#dfe6f0" />
            <circle cx="6" cy="10" r="5" fill="#ccd6e6" />
            <circle cx="18.500" cy="10.500" r="4.500" fill="#ccd6e6" />
            <rect x="3" y="10" width="18" height="5" fill="#d5deea" />
            <path d="M1 18 H23 M1 21.500 H15 M17 21.500 H23" stroke="#b9c6d4" strokeWidth="2" />
          </Svg>
          <span className="whitespace-pre">8°C  Fog</span>
        </button>
        <div className="ml-[18px] flex items-center gap-[9px]">
          <Svg w={12} h={8}>
            <path d="M1 7 L6 2 L11 7" stroke="#cfd8dc" strokeWidth="1.500" />
          </Svg>
          <Svg w={14} h={16}>
            <rect x="2" y="4" width="10" height="8" rx="2" stroke="#cfd8dc" strokeWidth="1.400" />
            <circle cx="7" cy="8" r="2" fill="#cfd8dc" />
            <path d="M4 1.500 H10 M4 14.500 H10" stroke="#cfd8dc" strokeWidth="1.300" />
          </Svg>
          <Svg w={16} h={10}>
            <rect x="1" y="1" width="12" height="8" stroke="#cfd8dc" strokeWidth="1.400" />
            <rect x="2" y="2" width="5" height="6" fill="#f2f5f6" />
            <rect x="14" y="3.500" width="1.500" height="3" fill="#cfd8dc" />
          </Svg>
          <Svg w={13} h={13}>
            <path d="M1 12 A11 11 0 0 1 12 1 M4 12 A8 8 0 0 1 12 4 M7 12 A5 5 0 0 1 12 7 M10 12 L12 10" stroke="#9fabb4" strokeWidth="1.400" />
            <path d="M12 1 V12 H1" stroke="#7d8b96" />
          </Svg>
          <Svg w={16} h={14}>
            <path d="M1 5 H3.500 L7 2 V12 L3.500 9 H1 Z" stroke="#cfd8dc" strokeWidth="1.200" />
            <path d="M9 5 Q10.500 7 9 9 M11 3 Q13.500 7 11 11 M13 1.500 Q16.500 7 13 12.500" stroke="#b4c0c8" strokeWidth="1.200" />
          </Svg>
        </div>
        <div className="ml-[6px] flex w-[50px] flex-col items-center text-[10px] leading-[16px] whitespace-nowrap">
          <span>9:47 PM</span>
          <span>1/8/2023</span>
        </div>
        <button type="button" aria-label="Notifications" className="mr-[20px] ml-[18px]">
          <Svg w={16} h={16}>
            <path d="M0 1 H15 V12 H7 L4 15 V12 H0 Z" fill="#f0f4f6" />
            <path d="M3 4.500 H12 M3 7.500 H9" stroke="#6b7c8a" strokeWidth="1.200" />
            <circle cx="12" cy="11.500" r="4" fill="#c3ccd4" />
            <path d="M13 9.500 A2.500 2.500 0 1 0 14 13" stroke="#3a4a5c" strokeWidth="1.100" />
          </Svg>
        </button>
      </div>
    </div>
  );
}

export default function App() {
  return (
    <div className="relative flex h-screen flex-col overflow-hidden bg-[#f1f1ee] font-['Open_Sans','Noto_Sans',sans-serif]">
      <TitleBar />
      <Ribbon />
      <div className="flex min-h-0 flex-1">
        <NavPane />
        <DocumentArea />
      </div>
      <StatusBar />
      <Taskbar />
      <div className="absolute bottom-[37px] left-[190px] flex h-[102px] w-[901px] items-center justify-center bg-black pt-[2px] font-['Liberation_Sans',sans-serif] text-[35px] text-[#ffff57]">
        Whatsapp; +92312 8248802
      </div>
    </div>
  );
}
